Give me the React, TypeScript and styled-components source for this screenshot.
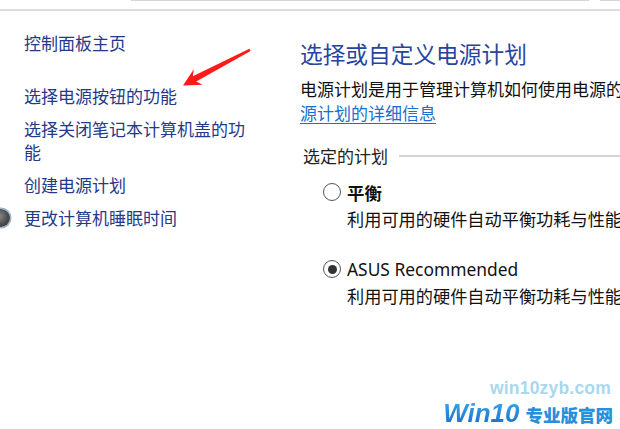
import React from "react";
import styled, { createGlobalStyle } from "styled-components";

const Global = createGlobalStyle`
  html, body { margin: 0; padding: 0; background: #fff; }
  body {
    width: 620px; height: 429px; overflow: hidden;
    font-family: "Noto Sans", "Noto Sans CJK SC", sans-serif;
  }
`;

const Page = styled.div`
  position: relative;
  width: 620px;
  height: 429px;
  overflow: hidden;
  background: #fff;
`;

const TopBar = styled.div`
  height: 9px;
  border-bottom: 2px solid #dcdcdc;
  display: flex;
  align-items: flex-start;
`;

const BoxEdge = styled.div<{ $w: number; $ml: number }>`
  width: ${(p) => p.$w}px;
  margin-left: ${(p) => p.$ml}px;
  height: 1px;
  background: #d6d6d6;
`;

const Body = styled.div`
  display: flex;
  align-items: flex-start;
`;

const Nav = styled.nav`
  width: 230px;
  padding: 20px 0 0 24px;
  flex: none;
  display: flex;
  flex-direction: column;
  gap: 10px;
`;

const NavLink = styled.a<{ $first?: boolean }>`
  display: block;
  font-family: "Noto Sans CJK SC", sans-serif;
  font-size: 17px;
  line-height: 23px;
  color: #24398a;
  text-decoration: none;
  margin-bottom: ${(p) => (p.$first ? "20px" : "0")};
`;

const NavIconRow = styled.div`
  display: flex;
  align-items: center;
  gap: 14px;
  margin-left: -32px;
`;

const SleepIcon = styled.span`
  width: 18px;
  height: 18px;
  flex: none;
  border-radius: 50%;
  background: radial-gradient(circle at 40% 40%, #8a8a8a 0%, #4d4d4d 55%, #2e2e2e 100%);
  box-shadow: 0 0 0 1.5px #9fb3c8;
`;

const Main = styled.main`
  flex: 1;
  min-width: 0;
  padding: 28px 0 0 46px;
  display: flex;
  flex-direction: column;
`;

const Title = styled.h1`
  margin: 0;
  font-family: "Noto Sans CJK SC", sans-serif;
  font-weight: 400;
  font-size: 22.7px;
  line-height: 30px;
  color: #2745a0;
  white-space: nowrap;
`;

const Intro = styled.div`
  margin-top: 8px;
  font-family: "Noto Sans CJK SC", sans-serif;
  font-size: 17px;
  line-height: 24px;
  color: #111;
`;

const Line = styled.div`
  white-space: nowrap;
`;

const InfoLink = styled.a`
  color: #1a6fd2;
  text-decoration: underline;
  text-underline-offset: 3px;
`;

const GroupHead = styled.div`
  margin-top: 19px;
  margin-left: 3px;
  display: flex;
  align-items: center;
  gap: 11px;
  font-family: "Noto Sans CJK SC", sans-serif;
  font-size: 17px;
  line-height: 24px;
  color: #222;
  white-space: nowrap;
`;

const Rule = styled.div`
  flex: 1;
  height: 2px;
  background: #d4d4d4;
`;

const Plans = styled.div`
  display: flex;
  flex-direction: column;
  gap: 26px;
  margin-top: 12px;
  padding-left: 23px;
`;

const Plan = styled.div`
  display: flex;
  flex-direction: column;
  gap: 3px;
`;

const PlanRow = styled.label`
  display: flex;
  align-items: center;
  gap: 6px;
  height: 24px;
`;

const Radio = styled.span<{ $checked?: boolean }>`
  box-sizing: border-box;
  width: 18px;
  height: 18px;
  flex: none;
  border-radius: 50%;
  border: 1.5px solid #555;
  background: #fff;
  display: flex;
  align-items: center;
  justify-content: center;
  &::after {
    content: "";
    width: 9px;
    height: 9px;
    border-radius: 50%;
    background: ${(p) => (p.$checked ? "#333" : "transparent")};
  }
`;

const PlanName = styled.span<{ $bold?: boolean }>`
  font-family: "Noto Sans", "Noto Sans CJK SC", sans-serif;
  font-size: 17.4px;
  font-weight: ${(p) => (p.$bold ? 700 : 400)};
  color: #111;
  white-space: nowrap;
`;

const PlanDesc = styled.div`
  padding-left: 24px;
  font-family: "Noto Sans CJK SC", sans-serif;
  font-size: 17.2px;
  line-height: 24px;
  color: #111;
  white-space: nowrap;
`;

const ArrowSvg = styled.svg`
  position: absolute;
  left: 175px;
  top: 45px;
  width: 80px;
  height: 50px;
  pointer-events: none;
`;

const Watermark = styled.div`
  position: absolute;
  right: 7px;
  bottom: 2px;
  display: flex;
  flex-direction: column;
  align-items: flex-end;
`;

const Site = styled.div`
  font-family: "Liberation Sans", Arial, sans-serif;
  font-weight: 700;
  font-size: 17.5px;
  line-height: 22px;
  color: #a9d8ee;
  letter-spacing: 0.2px;
  margin-right: 2px;
  margin-bottom: 2px;
`;

const Brand = styled.div`
  display: flex;
  align-items: baseline;
  gap: 6px;
  line-height: 24px;
`;

const BrandWin = styled.span`
  font-family: "Liberation Sans", Arial, sans-serif;
  font-style: italic;
  font-weight: 700;
  font-size: 26px;
  background: linear-gradient(180deg, #3aa6ea 0%, #1c6fc6 100%);
  -webkit-background-clip: text;
  background-clip: text;
  color: transparent;
`;

const BrandCn = styled.span`
  font-family: "Noto Sans CJK SC", sans-serif;
  font-weight: 900;
  font-size: 17.5px;
  color: #2790dc;
`;

export default function App() {
  return (
    <Page>
      <Global />
      <TopBar>
        <BoxEdge $w={460} $ml={131} />
        <BoxEdge $w={20} $ml={11} />
      </TopBar>
      <Body>
        <Nav>
          <NavLink $first>控制面板主页</NavLink>
          <NavLink>选择电源按钮的功能</NavLink>
          <NavLink>选择关闭笔记本计算机盖的功能</NavLink>
          <NavLink>创建电源计划</NavLink>
          <NavIconRow>
            <SleepIcon />
            <NavLink>更改计算机睡眠时间</NavLink>
          </NavIconRow>
        </Nav>
        <Main>
          <Title>选择或自定义电源计划</Title>
          <Intro>
            <Line>
              电源计划是用于管理计算机如何使用电源的硬件和系统设置的集合。
              <InfoLink>告诉我有关电</InfoLink>
            </Line>
            <Line>
              <InfoLink>源计划的详细信息</InfoLink>
            </Line>
          </Intro>
          <GroupHead>
            选定的计划
            <Rule />
          </GroupHead>
          <Plans>
            <Plan>
              <PlanRow>
                <Radio />
                <PlanName $bold>平衡</PlanName>
              </PlanRow>
              <PlanDesc>利用可用的硬件自动平衡功耗与性能。</PlanDesc>
            </Plan>
            <Plan>
              <PlanRow>
                <Radio $checked />
                <PlanName>ASUS Recommended</PlanName>
              </PlanRow>
              <PlanDesc>利用可用的硬件自动平衡功耗与性能。</PlanDesc>
            </Plan>
          </Plans>
        </Main>
      </Body>
      <ArrowSvg viewBox="0 0 80 50">
        <polygon
          points="8,40.5 27.5,39.8 21.2,36.6 75.6,6 74.4,3.8 17.8,31.3 18.8,24.2"
          fill="#ff1a1a"
        />
      </ArrowSvg>
      <Watermark>
        <Site>win10zyb.com</Site>
        <Brand>
          <BrandWin>Win10</BrandWin>
          <BrandCn>专业版官网</BrandCn>
        </Brand>
      </Watermark>
    </Page>
  );
}
